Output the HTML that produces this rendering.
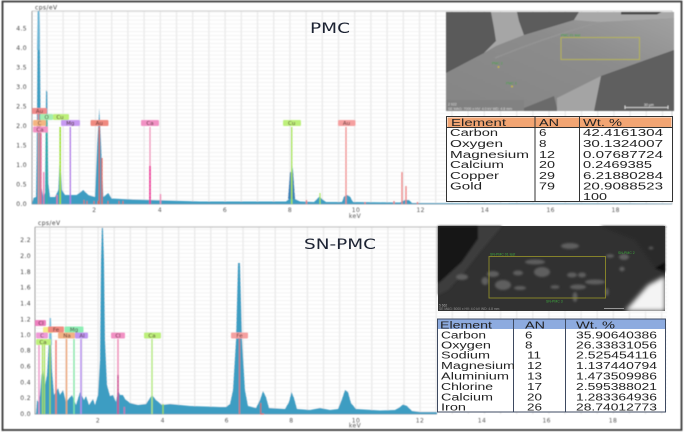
<!DOCTYPE html>
<html>
<head>
<meta charset="utf-8">
<style>
html,body{margin:0;padding:0;background:#fff;width:685px;height:432px;overflow:hidden}
svg{display:block}
text{font-family:"Liberation Sans",sans-serif}
.ax text{font-family:"DejaVu Sans",sans-serif;letter-spacing:.4px}
.lb text{font-family:"DejaVu Sans",sans-serif}
</style>
</head>
<body>
<svg width="685" height="432" viewBox="0 0 685 432" xmlns="http://www.w3.org/2000/svg">
<defs>
<filter id="b" x="-5%" y="-5%" width="110%" height="110%"><feGaussianBlur stdDeviation="0.45"/></filter>
<filter id="b2" x="-5%" y="-5%" width="110%" height="110%"><feGaussianBlur stdDeviation="0.35"/></filter>
<filter id="b3" x="-10%" y="-10%" width="120%" height="120%"><feGaussianBlur stdDeviation="1"/></filter>
<filter id="b4" x="-20%" y="-20%" width="140%" height="140%"><feGaussianBlur stdDeviation="2.5"/></filter>
<pattern id="hg1" width="10" height="3.9" patternUnits="userSpaceOnUse"><rect width="10" height="1" fill="#f3f3f3"/></pattern>
<pattern id="vg1" width="16.2" height="10" patternUnits="userSpaceOnUse" x="30"><rect width="1.4" height="10" fill="#ebebeb"/></pattern>
<pattern id="hg2" width="10" height="3.95" patternUnits="userSpaceOnUse"><rect width="10" height="1" fill="#f3f3f3"/></pattern>
<pattern id="vg2" width="16.1" height="10" patternUnits="userSpaceOnUse" x="33"><rect width="1.4" height="10" fill="#ebebeb"/></pattern>
<linearGradient id="sem1" x1="0" y1="1" x2="1" y2="0"><stop offset="0" stop-color="#858585"/><stop offset=".6" stop-color="#8c8c8c"/><stop offset="1" stop-color="#a2a2a2"/></linearGradient>
</defs>
<rect width="685" height="432" fill="#fff"/>

<g filter="url(#b)">
<!-- frame -->
<path d="M2.5 431 V1.5 H681.5 V430 H2.5" fill="none" stroke="#3a3a3a" stroke-width="1.8"/>

<!-- top plot -->
<rect x="32" y="11" width="640" height="193" fill="url(#hg1)"/>
<rect x="32" y="11" width="640" height="193" fill="url(#vg1)"/>
<path d="M32 11 H672 V204" fill="none" stroke="#cfcfcf" stroke-width="1"/>
<path d="M32 11 V204 H672" fill="none" stroke="#888" stroke-width=".8"/>
<path d="M32 204 L33.500 198 L36 197 L36.700 153 L37.700 11 L39.500 11 L40 50 L41.300 187 L43.300 197 L45 193 L46 90 L47.300 92 L48.300 183 L50 197 L55 197 L58.300 190 L60 153 L62 190 L65 195 L76.700 195 L83.300 190 L88.300 195 L95 197 L97.300 143 L99.300 108 L101 143 L103.300 197 L108.300 193 L111.700 198.500 L133 199.500 L150 200 L200 201.500 L286 201.500 L290 198 L291 170 L292 165 L293 170 L295 199 L300 201.500 L314 202 L317 199 L319.500 196.500 L322 199 L326 202 L342 202 L344 196.500 L347 195 L350 196.500 L353 202 L400 202.500 L403 201 L405 200 L409 200 L412 203 L672 203.500 V204 H32 Z" fill="#3d9dc2"/>
<path d="M37.700 11 L39.500 11 L40 50 L37 50Z" fill="#6db6d6"/>
<path d="M290 172 L293 172 L295 199 L288 199Z" fill="#3a7fb5"/>
<!-- markers top -->
<g fill="none" stroke-width="1.200">
<path d="M38.500 114 V204" stroke="#f08a8a"/>
<path d="M40.500 121 V204" stroke="#f2a05a"/>
<path d="M41 133 V204" stroke="#e24f9b"/>
<path d="M43.700 172 V204 M57 195V204" stroke="#ec6fae"/>
<path d="M46.700 120 V204" stroke="#33b79a"/>
<path d="M60.200 127 V204" stroke="#9fe02c" stroke-width="1.600"/>
<path d="M70.300 127 V204" stroke="#b07ae8" stroke-width="1.400"/>
<path d="M99.300 127 V204 M102 158 V204" stroke="#e5604f"/>
<path d="M150 127 V204" stroke="#ee8ab5" stroke-width="1.200"/>
<path d="M150 166 V204" stroke="#ec2f97" stroke-width="1.600"/>
<path d="M160.500 194 V204" stroke="#ee8ab5" stroke-width="1.400"/>
<path d="M291.700 127 V204" stroke="#a8e650" stroke-width="1.400"/>
<path d="M320 193 V204" stroke="#a8e650" stroke-width="1.200"/>
<path d="M346 127 V204" stroke="#f08a8a" stroke-width="1.300"/>
<path d="M402 172 V204 M406 186 V204 M306.500 200V204 M365 202V204 M394 201V204 M417.500 202V204" stroke="#ee7b7b" stroke-width="1.300"/>
<path d="M84 200V204 M87 201V204 M94 201V204 M98 201V204 M108 201V204 M119 201V204 M123 201V204" stroke="#e5604f" stroke-width=".9"/>
</g>
<!-- labels top -->
<g class="lb" font-size="5.500" fill="#4a2a2a" text-anchor="middle">
<rect x="32" y="108" width="15" height="6" rx="1" fill="#f08a8a"/><text x="39.500" y="113">Au</text>
<rect x="40" y="114" width="13" height="6" rx="1" fill="#a4eeb0"/><text x="46.700" y="119">O</text>
<rect x="53" y="114" width="16" height="6" rx="1" fill="#bdf07a"/><text x="60" y="119">Cu</text>
<rect x="33" y="120" width="13" height="6" rx="1" fill="#f5b681"/><text x="39.500" y="125">C</text>
<rect x="61" y="120" width="19" height="6" rx="1" fill="#c79af2"/><text x="70.300" y="125">Mg</text>
<rect x="33" y="126.500" width="15" height="6" rx="1" fill="#f291c4"/><text x="40" y="131.500">Ca</text>
<rect x="90.500" y="120" width="18" height="6" rx="1" fill="#f08a80"/><text x="99.300" y="125">Au</text>
<rect x="141" y="120" width="18" height="6" rx="1" fill="#f291c4"/><text x="150" y="125">Ca</text>
<rect x="283" y="120" width="18" height="6" rx="1" fill="#bdf07a"/><text x="291.700" y="125">Cu</text>
<rect x="338" y="120" width="17.500" height="6" rx="1" fill="#f5a0a0"/><text x="346.500" y="125">Au</text>
</g>
<!-- axes top -->
<g class="ax" font-size="6" fill="#444" text-anchor="end">
<text x="35" y="9.500" text-anchor="start">cps/eV</text>
<text x="27" y="30.500">4.5</text><text x="27" y="49.800">4.0</text><text x="27" y="69.300">3.5</text><text x="27" y="89">3.0</text><text x="27" y="108.500">2.5</text><text x="27" y="128">2.0</text><text x="27" y="147.500">1.5</text><text x="27" y="167">1.0</text><text x="27" y="186.500">0.5</text><text x="27" y="206">0.0</text>
</g>
<g class="ax" font-size="6" fill="#555" text-anchor="middle">
<text x="94.300" y="212">2</text><text x="160" y="212">4</text><text x="225" y="212">6</text><text x="290" y="212">8</text><text x="356" y="212">10</text><text x="420.700" y="212">12</text><text x="485" y="212">14</text><text x="550.700" y="212">16</text><text x="615.700" y="212">18</text>
<text x="355" y="218">keV</text>
</g>
</g>

<text x="310" y="33" font-size="14" fill="#1c2433" textLength="40" lengthAdjust="spacingAndGlyphs" filter="url(#b2)" style="font-family:'DejaVu Sans',sans-serif">PMC</text>

<!-- top SEM -->
<g filter="url(#b)">
<rect x="446" y="12" width="228" height="99" fill="url(#sem1)"/>
<path d="M446 12 H491 L494 28 L496 41 L484 53 L446 73Z" fill="#5a5a5a"/>
<path d="M491 12 H517 L519 21 L524 35 L496 46 L484 53 L496 41 L494 28Z" fill="#a6a6a6"/>
<path d="M517 12 H579 L574 20 L524 35 L519 21Z" fill="#5c5c5c"/>
<path d="M621 12 H662 L657 14.500 H621Z" fill="#4a4a4a"/>
<path d="M579 12 H621 V14.500 H657 L662 12 H674 V18 L600 22 L574 20Z" fill="#a8a8a8"/>
<path d="M674 50 L601 76 L594 111 H674Z" fill="#5e5e5e"/>
<path d="M557 98 L601 76 L594 111 H557Z" fill="#a4a4a4"/>
<path d="M524 108 L554 96 L557 108 V111 H524Z" fill="#6a6a6a"/>
<path d="M446 100 H524 V111 H446Z" fill="#777" opacity=".35"/>
<path d="M495 58 C520 48 545 38 600 22" stroke="#999" stroke-width="1.500" fill="none" opacity=".6"/>
<rect x="561" y="37.500" width="78.500" height="22" fill="none" stroke="#b9b64a" stroke-width=".9"/>
<g font-size="3.500" fill="#3ca83c"><text x="561" y="36.500">PMC 01 test</text><text x="492" y="64.500">PMC 2</text><text x="506" y="84.500">PMC 3</text></g>
<circle cx="498.500" cy="67" r="1" fill="#c9b93a"/><circle cx="512" cy="86.500" r="1" fill="#c9b93a"/>
<path d="M625 107.500 H668 M625 105.500V109 M668 105.500V109" stroke="#eee" stroke-width=".8"/>
<text x="644" y="106" font-size="3.500" fill="#eee">30 µm</text>
<text x="448" y="110" font-size="3.500" fill="#ddd">SE  MAG: 7000 x  HV: 4.0 kV  WD: 4.8 mm</text>
<text x="448" y="105.500" font-size="3.500" fill="#ddd">2 922</text>
</g>

<!-- top table -->
<g filter="url(#b2)">
<rect x="446.500" y="116.500" width="226" height="85" fill="#fff" stroke="#333" stroke-width="1"/>
<rect x="447.500" y="117.500" width="224" height="10" fill="#f2a573"/>
<path d="M446.500 127.500 H672.500 M535 116.500 V201.500 M579.500 116.500 V201.500" stroke="#333" stroke-width="1" fill="none"/>
<g font-size="10" fill="#222">
<text x="451" y="126" textLength="55" lengthAdjust="spacingAndGlyphs">Element</text>
<text x="539" y="126" textLength="20" lengthAdjust="spacingAndGlyphs">AN</text>
<text x="583" y="126" textLength="39" lengthAdjust="spacingAndGlyphs">Wt. %</text>
<text x="450" y="136" textLength="48" lengthAdjust="spacingAndGlyphs">Carbon</text><text x="539" y="136" textLength="7.500" lengthAdjust="spacingAndGlyphs">6</text><text x="583" y="136" textLength="80" lengthAdjust="spacingAndGlyphs">42.4161304</text>
<text x="450" y="147" textLength="53" lengthAdjust="spacingAndGlyphs">Oxygen</text><text x="539" y="147" textLength="7.500" lengthAdjust="spacingAndGlyphs">8</text><text x="583" y="147" textLength="80" lengthAdjust="spacingAndGlyphs">30.1324007</text>
<text x="450" y="158" textLength="79" lengthAdjust="spacingAndGlyphs">Magnesium</text><text x="539" y="158" textLength="16" lengthAdjust="spacingAndGlyphs">12</text><text x="583" y="158" textLength="80" lengthAdjust="spacingAndGlyphs">0.07687724</text>
<text x="450" y="168" textLength="54" lengthAdjust="spacingAndGlyphs">Calcium</text><text x="539" y="168" textLength="16" lengthAdjust="spacingAndGlyphs">20</text><text x="583" y="168" textLength="69" lengthAdjust="spacingAndGlyphs">0.2469385</text>
<text x="450" y="179" textLength="49" lengthAdjust="spacingAndGlyphs">Copper</text><text x="539" y="179" textLength="16" lengthAdjust="spacingAndGlyphs">29</text><text x="583" y="179" textLength="80" lengthAdjust="spacingAndGlyphs">6.21880284</text>
<text x="450" y="189.500" textLength="32" lengthAdjust="spacingAndGlyphs">Gold</text><text x="539" y="189.500" textLength="16" lengthAdjust="spacingAndGlyphs">79</text><text x="583" y="189.500" textLength="80" lengthAdjust="spacingAndGlyphs">20.9088523</text>
<text x="583" y="200" textLength="24" lengthAdjust="spacingAndGlyphs">100</text>
</g>
</g>

<g filter="url(#b)">
<!-- bottom plot -->
<rect x="35" y="227" width="632" height="187" fill="url(#hg2)"/>
<rect x="35" y="227" width="632" height="187" fill="url(#vg2)"/>
<path d="M35 227 H667" fill="none" stroke="#c4c4c4" stroke-width="1.200"/>
<path d="M35 227 V414 H437" fill="none" stroke="#888" stroke-width=".8"/>
<path d="M36 414 L37 400 L38.500 402 L40 395 L41.500 375 L43 370 L45 385 L47 375 L49 340 L50.300 318 L52 370 L54 395 L56 392 L58 388 L60 395 L63 390 L66 402 L72 395 L76 405 L80 392 L84 400 L86 396 L89 405 L93 399 L95 405 L98 395 L100 360 L101 260 L101.800 228 L103 228 L104 260 L105 340 L107 385 L110 396 L113 395 L116 402 L118 390 L120 395 L123 395 L125 399 L130 403 L138 405 L146 404 L152 395 L156 400 L162 405 L170 404 L190 406 L220 407 L226 407 L230 404 L233 390 L236 340 L238 263 L240 263 L242 340 L245 390 L248 406 L256 408 L260 400 L263 391 L266 397 L269 408 L285 409 L289 402 L291.500 392 L294 398 L297 409 L310 410 L320 408 L330 410 L338 409 L342 399 L345 390 L348 392 L351 403 L356 409 L380 410.500 L395 410 L400 407 L403 404.500 L407 406 L412 411 L420 412 L437 412 L437 414 Z" fill="#3d9dc2"/>
<path d="M49.500 318 L51 318 L52 345 L49 345Z" fill="#7cc0dc"/>
<!-- markers bottom -->
<g fill="none" stroke-width="1.300">
<path d="M39 345 V414" stroke="#ec8cc4"/>
<path d="M42.500 345 V414 M44.500 345 V414" stroke="#a6e055"/>
<path d="M50 345 V414" stroke="#a6d94a"/>
<path d="M56 340 V414" stroke="#f07a70" stroke-width="1.500"/>
<path d="M66.500 339 V414" stroke="#eda574" stroke-width="1.500"/>
<path d="M74 339 V414" stroke="#7fe6a5" stroke-width="1.400"/>
<path d="M81 339 V414" stroke="#b48aee" stroke-width="1.500"/>
<path d="M118 339 V414" stroke="#ef8cb8" stroke-width="1.500"/>
<path d="M118 375 V414" stroke="#c93c8b" stroke-width="1.300"/>
<path d="M124.300 407 V414" stroke="#d070b0"/>
<path d="M152 339 V414" stroke="#b1e87a" stroke-width="1.400"/>
<path d="M163 404 V414" stroke="#9bd85a" stroke-width="1.400"/>
<path d="M239.500 339 V414" stroke="#d8757a" stroke-width="1.300"/>
<path d="M260.700 403 V414 H264" stroke="#e2605a" stroke-width="1"/>
</g>
<!-- labels bottom -->
<g class="lb" font-size="5.500" fill="#4a2a2a" text-anchor="middle">
<rect x="35" y="320" width="11" height="6" rx="1" fill="#ee7fc0"/><text x="41" y="325">Cl</text>
<rect x="43" y="327" width="10" height="6" rx="1" fill="#f5ec8a"/>
<rect x="48" y="326.500" width="16" height="6" rx="1" fill="#f08a80"/><text x="56" y="331.500">Fe</text>
<rect x="64.500" y="326.500" width="19" height="6" rx="1" fill="#8ceeb4"/><text x="74" y="331.500">Mg</text>
<rect x="36" y="332.500" width="12" height="6" rx="1" fill="#f09ad8"/><text x="42" y="337.500">C</text>
<rect x="58" y="332.500" width="17" height="6" rx="1" fill="#f3b285"/><text x="67" y="337.500">Na</text>
<rect x="75" y="332.500" width="13" height="6" rx="1" fill="#be95f2"/><text x="82" y="337.500">Al</text>
<rect x="36" y="339" width="15" height="6" rx="1" fill="#bdf07a"/><text x="43" y="344">Ca</text>
<rect x="111" y="332.500" width="14" height="6" rx="1" fill="#f291c4"/><text x="118" y="337.500">Cl</text>
<rect x="144" y="332.500" width="17" height="6" rx="1" fill="#bdf07a"/><text x="152" y="337.500">Ca</text>
<rect x="231" y="332.500" width="17" height="6" rx="1" fill="#f5a0a0"/><text x="239.500" y="337.500">Fe</text>
</g>
<!-- axes bottom -->
<g class="ax" font-size="6" fill="#444" text-anchor="end">
<text x="38" y="225" text-anchor="start">cps/eV</text>
<text x="31" y="242">2.2</text><text x="31" y="258">2.0</text><text x="31" y="274">1.8</text><text x="31" y="289.500">1.6</text><text x="31" y="305.500">1.4</text><text x="31" y="321.500">1.2</text><text x="31" y="337">1.0</text><text x="31" y="352.500">0.8</text><text x="31" y="368.500">0.6</text><text x="31" y="384.500">0.4</text><text x="31" y="400">0.2</text><text x="31" y="416">0.0</text>
</g>
<g class="ax" font-size="6" fill="#555" text-anchor="middle">
<text x="98" y="422.500">2</text><text x="162.700" y="422.500">4</text><text x="226.700" y="422.500">6</text><text x="291.300" y="422.500">8</text><text x="356" y="422.500">10</text><text x="420" y="422.500">12</text><text x="482" y="422.500">14</text><text x="546.700" y="422.500">16</text><text x="613" y="422.500">18</text>
<text x="355" y="427.500">keV</text>
</g>
</g>

<text x="304" y="249" font-size="14" fill="#1c2433" textLength="72" lengthAdjust="spacingAndGlyphs" filter="url(#b2)" style="font-family:'DejaVu Sans',sans-serif">SN-PMC</text>

<!-- bottom SEM -->
<g>
<rect x="438" y="226" width="227" height="85" fill="#313131"/>
<g filter="url(#b3)">
<path d="M438 226 H478 V239 L462 262 L438 284Z" fill="#181818"/>
<path d="M478 226 H502 L480 252 L462 275 L448 290 L438 295 V284 L462 262 L478 239Z" fill="#3e3e3e"/>
<path d="M600 226 H665 V272 L655 268 L635 240Z" fill="#2b2b2b"/>
<path d="M655 268 L665 272 V262Z" fill="#0c0c0c"/>
</g>
<path d="M665 276 L648 285 L625 311 H665Z" fill="#f4f4f4" filter="url(#b4)"/>
<g fill="#5f5f5f" filter="url(#b3)">
<ellipse cx="570" cy="246" rx="9" ry="3"/><ellipse cx="462" cy="277" rx="6" ry="3"/><ellipse cx="485" cy="281" rx="3.500" ry="4"/><ellipse cx="493" cy="274" rx="6" ry="3"/><ellipse cx="542" cy="272" rx="8" ry="5"/><ellipse cx="518" cy="273" rx="5" ry="2.500"/><ellipse cx="535" cy="262" rx="10" ry="2.500"/><ellipse cx="503" cy="285" rx="8" ry="5"/><ellipse cx="572" cy="275" rx="5" ry="2.500"/><ellipse cx="582" cy="275" rx="4" ry="2.500"/><ellipse cx="595" cy="282" rx="10" ry="2.500"/><ellipse cx="578" cy="287" rx="8" ry="2.500"/><ellipse cx="555" cy="287" rx="4.500" ry="1.700"/><ellipse cx="610" cy="256" rx="4" ry="1.700"/><ellipse cx="624" cy="257" rx="5" ry="3"/><ellipse cx="622" cy="269" rx="2.700" ry="2.300"/><ellipse cx="651" cy="248" rx="2.300" ry="1.300"/><ellipse cx="575" cy="297" rx="2.500" ry="5"/><ellipse cx="607" cy="292" rx="1.700" ry="4"/><ellipse cx="520" cy="288" rx="6" ry="2"/>
</g>
<rect x="489" y="256.500" width="116.500" height="41.500" fill="none" stroke="#8f8c2a" stroke-width=".9"/>
<g font-size="3.500" fill="#3ca83c" filter="url(#b2)"><text x="490" y="255.500">SN-PMC 01 test</text><text x="618" y="254">SN-PMC 2</text><text x="546" y="302.500">SN-PMC 3</text></g>
<text x="439" y="306.500" font-size="3.300" fill="#aaa" filter="url(#b2)">5 662</text>
<text x="439" y="310" font-size="3.300" fill="#999" filter="url(#b2)">SE  MAG: 5000 x  HV: 4.0 kV  WD: 4.8 mm</text>
<path d="M604 308.500 H624" stroke="#bbb" stroke-width=".8"/>
</g>

<!-- bottom table -->
<g filter="url(#b2)">
<rect x="437.500" y="319" width="228" height="93" fill="#fff" stroke="#3c4a60" stroke-width="1"/>
<rect x="438" y="319.500" width="227" height="9.500" fill="#8dabdf"/>
<path d="M513.500 319 V412 M565.500 319 V412" stroke="#3c4a60" stroke-width="1" fill="none"/>
<g font-size="10" fill="#222">
<text x="440" y="328.500" textLength="52" lengthAdjust="spacingAndGlyphs">Element</text><text x="525" y="328.500" textLength="20" lengthAdjust="spacingAndGlyphs">AN</text><text x="576" y="328.500" textLength="39" lengthAdjust="spacingAndGlyphs">Wt. %</text>
<text x="441" y="338.500" textLength="45" lengthAdjust="spacingAndGlyphs">Carbon</text><text x="525" y="338.500" textLength="7.500" lengthAdjust="spacingAndGlyphs">6</text><text x="576" y="338.500" textLength="81" lengthAdjust="spacingAndGlyphs">35.90640386</text>
<text x="441" y="348.500" textLength="50" lengthAdjust="spacingAndGlyphs">Oxygen</text><text x="525" y="348.500" textLength="7.500" lengthAdjust="spacingAndGlyphs">8</text><text x="576" y="348.500" textLength="81" lengthAdjust="spacingAndGlyphs">26.33831056</text>
<text x="441" y="358.500" textLength="49" lengthAdjust="spacingAndGlyphs">Sodium</text><text x="527" y="358.500" textLength="14" lengthAdjust="spacingAndGlyphs">11</text><text x="576" y="358.500" textLength="81" lengthAdjust="spacingAndGlyphs">2.525454116</text>
<text x="441" y="369" textLength="74" lengthAdjust="spacingAndGlyphs">Magnesium</text><text x="527" y="369" textLength="15" lengthAdjust="spacingAndGlyphs">12</text><text x="576" y="369" textLength="81" lengthAdjust="spacingAndGlyphs">1.137440794</text>
<text x="441" y="379.500" textLength="68" lengthAdjust="spacingAndGlyphs">Aluminium</text><text x="527" y="379.500" textLength="15" lengthAdjust="spacingAndGlyphs">13</text><text x="576" y="379.500" textLength="81" lengthAdjust="spacingAndGlyphs">1.473509986</text>
<text x="441" y="390" textLength="52" lengthAdjust="spacingAndGlyphs">Chlorine</text><text x="527" y="390" textLength="15" lengthAdjust="spacingAndGlyphs">17</text><text x="576" y="390" textLength="81" lengthAdjust="spacingAndGlyphs">2.595388021</text>
<text x="441" y="400.500" textLength="52" lengthAdjust="spacingAndGlyphs">Calcium</text><text x="527" y="400.500" textLength="15" lengthAdjust="spacingAndGlyphs">20</text><text x="576" y="400.500" textLength="81" lengthAdjust="spacingAndGlyphs">1.283364936</text>
<text x="441" y="410.500" textLength="25" lengthAdjust="spacingAndGlyphs">Iron</text><text x="527" y="410.500" textLength="15" lengthAdjust="spacingAndGlyphs">26</text><text x="576" y="410.500" textLength="81" lengthAdjust="spacingAndGlyphs">28.74012773</text>
</g>
</g>
</svg>
</body>
</html>
